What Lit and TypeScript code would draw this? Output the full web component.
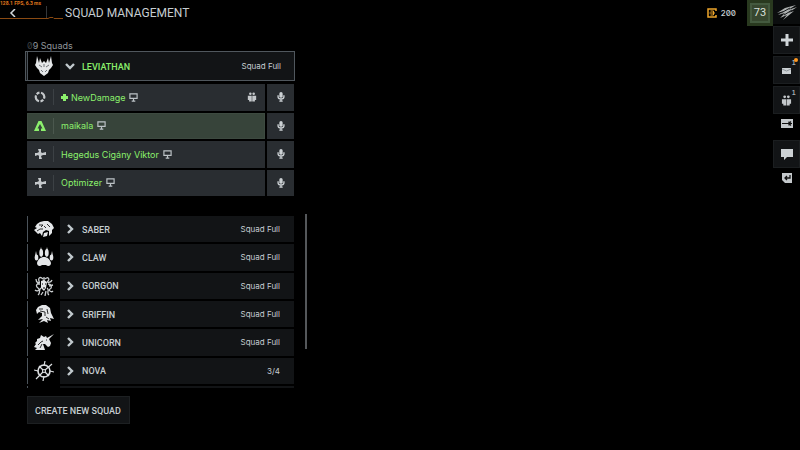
import { LitElement, html, css, svg, nothing, TemplateResult } from "lit";
import { customElement } from "lit/decorators.js";
import { classMap } from "lit/directives/class-map.js";

const icon = (size: number, box: string, body: TemplateResult) => html`
  <svg width=${size} height=${size} viewBox=${box} aria-hidden="true">${body}</svg>`;

const emblems: Record<string, TemplateResult> = {
  leviathan: svg`<path fill="#e4e6e8" d="M3 0L5 7L6 2L8 7L10 5L12 7L14 2L15 7L17 0L18 7L19 9L17 12L15 14L14 17L10 20L6 17L5 14L3 12L1 9L2 7Z"/><path stroke="#50555a" stroke-width=".8" fill="none" d="M5 9L8 11M15 9L12 11M7 14L9 16M13 14L11 16M10 8V11"/>`,
  saber: svg`<path fill="#e4e6e8" d="M1 8L3 5L6 3L10 2L14 2L18 5L20 9L18 11L18 14L15 17L15 12L12 11L9 13L8 17L6 14L4 15L2 13L0 11L3 9Z"/><path stroke="#000" stroke-width=".8" fill="none" d="M5 6L9 6L7 8M3 12L6 10L9 10M13 5L16 8M10 7L12 9"/><path fill="#e4e6e8" d="M10 14L14 13L13 17L9 18Z"/>`,
  claw: svg`<g fill="#e4e6e8"><path d="M3 16C4 12 7 10 10 10S16 12 17 16C17 19 14 20 12 18H8C6 20 3 19 3 16Z"/><ellipse cx="2.500" cy="10.500" rx="1.800" ry="3"/><ellipse cx="7.200" cy="6" rx="1.900" ry="4"/><ellipse cx="12.800" cy="6" rx="1.900" ry="4"/><ellipse cx="17.500" cy="10.500" rx="1.800" ry="3"/><path d="M7 0L8 4H6ZM13 0L14 4H12ZM2 4L3 9H1ZM18 4L19 9H17Z"/></g>`,
  gorgon: svg`<path stroke="#cdd0d2" stroke-width="1.300" fill="none" d="M9 3C6 0 4 2 5 5S2 7 2 3M6 7C3 7 1 10 4 12S3 16 1 14M7 12C4 14 7 17 4 19M11 3C14 0 16 3 14 5S17 7 18 4M14 8C18 8 18 12 16 13S17 17 19 15M13 12C16 14 12 17 15 19M10 1V5M9 16L7 19M12 15L11 20M3 8H6M15 10L19 9"/><path fill="#e4e6e8" d="M7 5L10 4L13 6L12 12L10 15L7 12Z"/><path stroke="#000" d="M8 8H9M11 8H12M9 12H11"/>`,
  griffin: svg`<path fill="#e4e6e8" d="M2 6L4 3L8 1L12 1L16 4L17 9L20 15L16 14L17 17L13 16L14 19L10 17L5 19L9 15L4 16L8 12L8 9L5 8L3 10Z"/><path stroke="#000" stroke-width=".8" fill="none" d="M5 5L9 5M6 7L11 8L11 12M13 5L14 10M12 13L15 15"/>`,
  unicorn: svg`<path fill="#e4e6e8" d="M20 2L15 7L17 11L16 14L14 15L11 12L9 12L11 18H1L3 16L0 15L2 12L1 11L3 9L3 7L6 6L7 3L10 5L12 4L13 6Z"/><path stroke="#000" stroke-width=".8" fill="none" d="M4 13L7 10L9 9M6 16L8 12M12 8H13"/>`,
  nova: svg`<g fill="none" stroke="#dde0e2" stroke-width="1.200"><circle cx="10" cy="10" r="6" stroke-width="1.600"/><circle cx="10" cy="10" r="1.500"/><path d="M11 0L10 5M10 15L9 20M0 9L4 10M16 10L20 11M5 5L9 9M11 11L15 15M2 18L9 11M11 9L18 3"/></g>`,
};

const classes: Record<string, TemplateResult> = {
  assault: svg`<g fill="none" stroke="#c4c8cb" stroke-width="2.200"><path d="M7 1.700A4.400 4.400 0 0 1 10 7.600"/><path d="M5 10.300A4.400 4.400 0 0 1 2 4.400"/><path d="M5.500 1.700A4.400 4.400 0 0 0 2.800 3.200"/><path d="M6.500 10.300A4.400 4.400 0 0 0 9.200 8.800"/></g>`,
  recon: svg`<path fill="#8bf06c" d="M4.500 1H7.500L12 11H7V8.500H8.500L6 4L3.500 8.500H5V11H0Z"/>`,
  support: svg`<path fill="#c4c8cb" d="M4 1H7V4L8 5L12 4V7H9L7 8L8 11H5V8L4 7L1 8V5H3L5 4Z"/>`,
};

const people = svg`<g fill="#c4c8cb"><circle cx="4" cy="1.500" r="1.500"/><circle cx="8" cy="1.500" r="1.500"/><path d="M1 4H5.700V11H2.500V9H1ZM6.300 4H11V9H9.500V11H6.300Z"/></g>`;
const mic = svg`<rect x="4" y="0" width="4" height="7" rx="2" fill="#ccd1d4"/><path d="M2.500 4V6C2.500 9 9.500 9 9.500 6V4M6 8V11M4 11H8" fill="none" stroke="#ccd1d4" stroke-width="1.600"/>`;
const monitor = svg`<path d="M1 1H9V6H1ZM5 6V9M3 9H7" fill="none" stroke="#bcc2c6" stroke-width="1.300"/>`;

const members = [
  { name: "NewDamage", role: "assault", leader: true, self: false },
  { name: "maikala", role: "recon", leader: false, self: true },
  { name: "Hegedus Cigány Viktor", role: "support", leader: false, self: false },
  { name: "Optimizer", role: "support", leader: false, self: false },
];

const squads = [
  { name: "SABER", status: "Squad Full" },
  { name: "CLAW", status: "Squad Full" },
  { name: "GORGON", status: "Squad Full" },
  { name: "GRIFFIN", status: "Squad Full" },
  { name: "UNICORN", status: "Squad Full" },
  { name: "NOVA", status: "3/4" },
];

@customElement("app-root")
export class AppRoot extends LitElement {
  static styles = css`
    :host {
      display: block;
      min-height: 100vh;
      background: #000;
      color: #c6cdd1;
      font: 9px/12px Roboto, "Liberation Sans", sans-serif;
    }
    * { box-sizing: border-box; }
    svg { display: block; flex: none; }
    button {
      display: flex;
      align-items: center;
      margin: 0;
      padding: 0;
      border: 0;
      background: none;
      color: inherit;
      font: inherit;
      text-align: left;
    }
    ul { list-style: none; margin: 0; padding: 0; }
    .page { display: flex; justify-content: space-between; }
    .main { flex: 1; position: relative; }
    .perf { position: absolute; left: 0; top: 0; color: #e0781c; font-size: 5px; line-height: 6px; font-weight: 700; }
    .graph { position: absolute; left: 0; top: 5px; }
    .top { display: flex; align-items: center; height: 26px; }
    .back { width: 65px; height: 26px; padding-left: 9px; }
    .title { margin: 0; font-size: 12px; line-height: 14px; font-weight: 400; }
    .panel { width: 270px; margin: 14px 0 0 25px; }
    .count { margin: 0 2px; line-height: 11px; font-size: 9px; color: #8f959a; font-weight: 400;
      font-family: Inter, Roboto, sans-serif; font-feature-settings: "zero"; }
    .dim { color: #3c4044; }
    .squad { width: 100%; height: 100%; background: #121416; overflow: hidden; }
    .open { height: 30px; border: 1px solid #50575d; padding-left: 1px; }
    .emblem {
      display: grid;
      place-items: center;
      align-self: stretch;
      width: 33px;
      background: #000;
      border-left: 1px solid #4b535a;
    }
    .arrow { margin: 0 7px 0 5px; }
    .squadname { flex: 1; font-weight: 500; padding-top: 1px; }
    .open .squadname { color: #8bf06c; }
    .status { font: 8px/12px Inter, Roboto, sans-serif; padding: 0 14px 0 0; }
    .open .status { padding-right: 13px; }
    .members { display: grid; grid-auto-rows: 1fr; gap: 2px; height: 112px; margin: 3px 1px 0 2px; }
    .member { display: grid; grid-template-columns: 1fr 27px; gap: 2px; }
    .card { display: flex; align-items: center; background: #292d31; color: #8bf06c; padding-right: 8px; }
    .self { background: #37443a; box-shadow: inset 0 0 0 1px #3d4a40; }
    .role { display: grid; place-items: center; width: 27px; height: 16px; border-right: 1px solid #3c4145; margin-right: 7px; }
    .self .role { border-color: #4b584e; }
    .leader { margin-right: 3px; }
    .name { margin-right: 4px; font-family: Inter, Roboto, sans-serif; padding-top: 1px; }
    .group { margin-left: auto; }
    .mic { justify-content: center; background: #292d31; }
    .listwrap { display: flex; justify-content: space-between; width: 280px; margin: 18px 0 0 2px; }
    .squads { display: grid; grid-template-rows: repeat(6, 1fr) 2px; gap: 2px; width: 267px; height: 172px; margin-top: 2px; }
    .next { display: flex; background: #121416; }
    .thumb { width: 2px; height: 135px; background: #54575a; }
    .create { margin: 8px 0 0 2px; padding: 1px 8px 0 7px; height: 28px; background: #121416; border: 1px solid #1d2022; font-weight: 500; }
    .side { display: flex; }
    .credits { display: flex; align-items: center; gap: 4px; height: 26px; margin-right: 11px;
      font: 500 8px/12px Inter, Roboto, sans-serif; font-feature-settings: "zero"; }
    .rank {
      display: grid;
      place-items: center;
      width: 26px;
      height: 26px;
      background: #37472f;
      border: 3px solid #29391f;
      box-shadow: inset 0 0 0 2px #445a3f;
      font-size: 11px;
      color: #dbe1dc;
    }
    .rail { display: flex; flex-direction: column; gap: 2px; width: 27px; }
    .tile { position: relative; justify-content: center; height: 28px; background: #121416; border: 1px solid #1b1e20; }
    .logo { display: grid; place-items: center; height: 24px; background: #0b0d0e; }
    .bare { justify-content: center; height: 16px; margin-bottom: 6px; }
    .badge { position: absolute; right: 3px; top: 1px; font: 8px/10px "Liberation Sans", sans-serif; }
    .alert { position: absolute; right: 1px; top: 1px; width: 4px; height: 4px; border-radius: 50%; background: #ff9821; }
  `;

  private squad(name: string, status: string, open = false) {
    return html`<button class=${classMap({ squad: true, open })} aria-expanded=${open ? "true" : "false"}>
      <span class="emblem">${icon(20, "0 0 20 20", emblems[name.toLowerCase()])}</span>
      <span class="arrow">${icon(10, "0 0 10 10", open
        ? svg`<path d="M1 3L5 7L9 3" fill="none" stroke="#c1c9cd" stroke-width="2.400"/>`
        : svg`<path d="M3 1L7 5L3 9" fill="none" stroke="#c1c9cd" stroke-width="2.400"/>`)}</span>
      <span class="squadname">${name}</span>
      <span class="status">${status}</span>
    </button>`;
  }

  render() {
    return html`<div class="page">
      <main class="main">
        <span class="perf">128.1 FPS, 6.3 ms</span>
        <svg class="graph" width="64" height="15" viewBox="0 0 64 15" aria-hidden="true">
          <path d="M46.500 1V13" stroke="#34373a"/>
          <path d="M0 13.500H48L50 12.500H53L54 13.500H63" fill="none" stroke="#8a4a12"/>
        </svg>
        <header class="top">
          <button class="back" aria-label="Back">${icon(8, "0 0 8 8", svg`<path d="M6 0L2 4L6 8" fill="none" stroke="#d4dadd" stroke-width="1.500"/>`)}</button>
          <h1 class="title">SQUAD MANAGEMENT</h1>
        </header>
        <section class="panel">
          <h2 class="count"><span class="dim">0</span>9 Squads</h2>
          ${this.squad("LEVIATHAN", "Squad Full", true)}
          <ul class="members">
            ${members.map((m) => html`<li class="member">
              <div class=${classMap({ card: true, self: m.self })}>
                <span class="role">${icon(12, "0 0 12 12", classes[m.role])}</span>
                ${m.leader ? html`<span class="leader">${icon(7, "0 0 7 7", svg`<path fill="#8bf06c" d="M2 0H5V2H7V5H5V7H2V5H0V2H2Z"/>`)}</span>` : nothing}
                <span class="name">${m.name}</span>
                ${icon(9, "0 0 10 10", monitor)}
                ${m.leader ? html`<span class="group">${icon(10, "0 0 12 11", people)}</span>` : nothing}
              </div>
              <button class="mic" aria-label="Mute ${m.name}">${icon(10, "0 0 12 12", mic)}</button>
            </li>`)}
          </ul>
          <div class="listwrap">
            <ul class="squads">
              ${squads.map((s) => html`<li>${this.squad(s.name, s.status)}</li>`)}
              <li class="next"><span class="emblem"></span></li>
            </ul>
            <div class="thumb"></div>
          </div>
          <button class="create">CREATE NEW SQUAD</button>
        </section>
      </main>
      <aside class="side">
        <div class="credits">
          ${icon(10, "0 0 10 10", svg`<path d="M9 3V1H1V9H9V7" fill="none" stroke="#eda52b" stroke-width="1.500"/><path d="M3.500 3H6.500V7H3.500M2.500 5H8" fill="none" stroke="#eda52b"/>`)}
          <span>200</span>
        </div>
        <div class="rank">73</div>
        <nav class="rail">
          <div class="logo">${icon(22, "0 0 22 22", svg`<path fill="#aeb1b1" d="M1 12L9 7L20 4L12 9L21 6L12 12L18 10L7 19L11 14L4 17L9 12L2 14L8 10Z"/><path stroke="#15181a" d="M5 12L14 7M8 14L16 9"/>`)}</div>
          <button class="tile" aria-label="Add">${icon(14, "0 0 14 14", svg`<path d="M7 1V13M1 7H13" stroke="#d0d6d9" stroke-width="3"/>`)}</button>
          <button class="tile" aria-label="Messages">${icon(9, "0 0 9 9", svg`<path fill="#ccd1d4" d="M0 2H9V8H0Z"/><path d="M0 3L4.500 5L9 3" fill="none" stroke="#8d9498"/>`)}<span class="badge">1</span><span class="alert"></span></button>
          <button class="tile" aria-label="Friends">${icon(11, "0 0 12 11", people)}<span class="badge">1</span></button>
          <button class="bare" aria-label="Controls">${icon(12, "0 0 12 12", svg`<path fill="#c4c8cb" d="M0 1H12V10H0Z"/><path stroke="#111" stroke-width="1.200" fill="none" d="M1 5.500H11M8 3.500V7.500M10 3.500L8 5.500L10 7.500"/>`)}</button>
          <button class="tile" aria-label="Chat">${icon(12, "0 0 12 12", svg`<path fill="#ccd1d4" d="M0 1H12V9H6L3 12V9H0Z"/>`)}</button>
          <button class="bare" aria-label="Leave">${icon(12, "0 0 12 12", svg`<path fill="#c4c8cb" d="M1 1H11V11H4L1 8Z"/><path stroke="#111" stroke-width="1.300" fill="none" d="M9 3V6H4M6 4L4 6L6 8"/>`)}</button>
        </nav>
      </aside>
    </div>`;
  }
}
